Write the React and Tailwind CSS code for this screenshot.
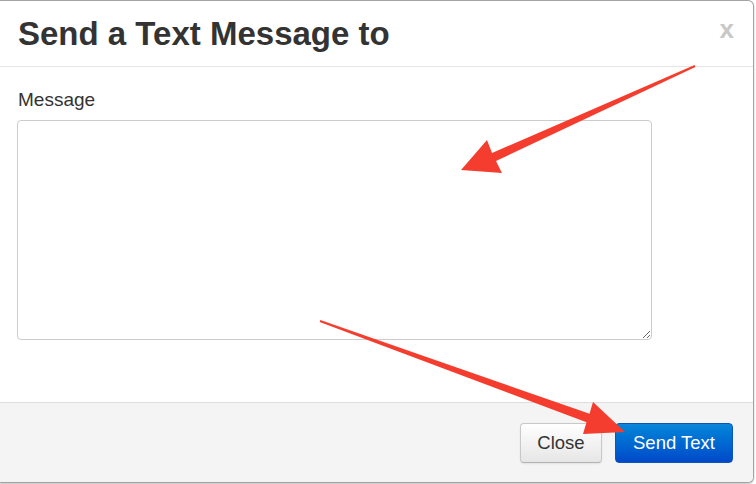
export default function App() {
  return (
    <div className="relative w-[756px] h-[484px] bg-white overflow-hidden" style={{ fontFamily: '"Liberation Sans", Arial, sans-serif' }}>
      <div className="w-[754px] h-[483px] flex flex-col border-t border-r border-b border-[#a3a3a3] rounded-tr-[6px] rounded-br-[6px] bg-white overflow-hidden shadow-[0_1px_2px_rgba(0,0,0,0.25)]">
        <div className="h-[66px] shrink-0 flex items-center justify-between pl-[18px] pr-[19px] border-b border-[#e5e5e5]">
          <h3 className="text-[33px] leading-none font-bold text-[#333]">Send a Text Message to</h3>
          <span className="text-[26px] leading-none font-bold text-[#c8c8c8] -mt-[9px]">x</span>
        </div>
        <div className="flex-1 pl-[17px] pt-[22px]">
          <label className="block text-[19px] leading-[22px] text-[#333] pl-[1px]">Message</label>
          <textarea className="mt-[9px] block w-[635px] h-[220px] border border-[#cccccc] rounded-[4px] bg-white outline-none" />
        </div>
        <div className="h-[80px] shrink-0 flex items-center justify-end gap-[13px] pr-[20px] bg-[#f4f4f4] border-t border-[#dddddd]">
          <button className="w-[82px] h-[40px] rounded-[4px] border border-[#c8c8c8] border-b-[#b3b3b3] bg-gradient-to-b from-white to-[#e6e6e6] text-[18.5px] text-[#333] shadow-[inset_0_1px_0_rgba(255,255,255,0.3),0_1px_2px_rgba(0,0,0,0.08)]">Close</button>
          <button className="w-[118px] h-[40px] rounded-[4px] border border-[#0b55b8] bg-gradient-to-b from-[#0b86d9] to-[#0048c9] text-[18.5px] text-white">Send Text</button>
        </div>
      </div>
      <svg className="absolute inset-0 pointer-events-none" width="756" height="484" viewBox="0 0 756 484">
        <defs>
          <filter id="soft" x="-5%" y="-5%" width="110%" height="110%">
            <feGaussianBlur stdDeviation="0.35" />
          </filter>
        </defs>
        <g fill="#f43e2d" filter="url(#soft)">
          <polygon points="694.6,65.1 695.4,66.9 496,161 502,173 461,170 487,140 492,153" />
          <polygon points="320.3,320.1 589.5,413.8 593,402 625,432 583,434 586.5,422.2 319.7,321.9" />
        </g>
      </svg>
    </div>
  );
}
